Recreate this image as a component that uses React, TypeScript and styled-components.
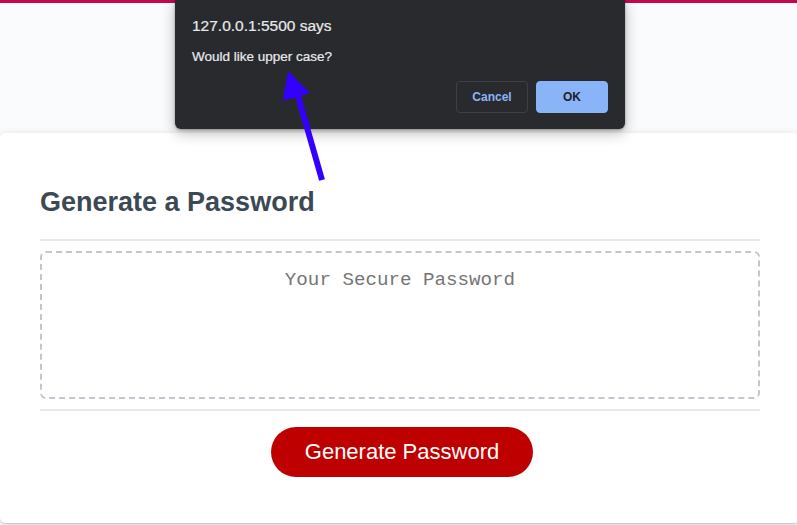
import React from "react";
import styled, { createGlobalStyle } from "styled-components";

const Global = createGlobalStyle`
  html, body { margin: 0; padding: 0; }
  body {
    background: #f9fbfd;
    font-family: "Liberation Sans", Arial, sans-serif;
    overflow: hidden;
    width: 797px;
    height: 525px;
  }
`;

const Page = styled.div`
  position: relative;
  width: 797px;
  height: 525px;
  overflow: hidden;
  background: #f9fbfd;
`;

const TopBar = styled.div`
  height: 3px;
  background: #c4084f;
`;

const Wrapper = styled.main`
  padding-top: 130px;
`;

const Card = styled.section`
  box-sizing: border-box;
  width: 800px;
  background: #ffffff;
  border-radius: 5px;
  box-shadow: rgba(0, 0, 0, 0.15) 0px 2px 8px 0px, rgba(0, 0, 0, 0.12) 0 1px 1px;
  color: hsl(206, 17%, 28%);
  font-size: 18px;
  padding: 30px 40px;
`;

const CardHeader = styled.header`
  &::after {
    content: " ";
    display: block;
    width: 100%;
    background: #e7e9eb;
    height: 2px;
  }
`;

const Title = styled.h2`
  font-size: 27px;
  font-weight: 700;
  margin: 24px 0 20.8px;
  line-height: normal;
`;

const CardBody = styled.div`
  min-height: 100px;
`;

const Output = styled.textarea`
  appearance: none;
  box-sizing: border-box;
  display: block;
  width: 100%;
  padding: 16px 15px 84px;
  font-family: "Liberation Mono", "Courier New", monospace;
  font-size: 19.2px;
  line-height: normal;
  text-align: center;
  margin: 10px 0;
  border: 2px dashed #c0c7cf;
  border-radius: 6px;
  resize: none;
  overflow: hidden;
  background: #fff;
  color: #333;
  &::placeholder {
    color: #757575;
  }
`;

const CardFooter = styled.footer`
  text-align: center;
  &::before {
    content: " ";
    display: block;
    width: 100%;
    background: #e7e9eb;
    height: 2px;
  }
`;

const GenerateButton = styled.button`
  border: none;
  background-color: #bf0000;
  border-radius: 25px;
  color: #fff;
  display: inline-block;
  font-family: "Liberation Sans", Arial, sans-serif;
  font-size: 22px;
  line-height: 22px;
  margin: 16px 16px 16px 20px;
  padding: 14px 34px;
  cursor: pointer;
`;

const Dialog = styled.div`
  position: absolute;
  top: 0;
  left: 175px;
  width: 450px;
  height: 129px;
  box-sizing: border-box;
  background: #292a2d;
  border-radius: 0 0 6px 6px;
  box-shadow: 0 4px 14px rgba(0, 0, 0, 0.28), 0 1px 3px rgba(0, 0, 0, 0.3);
  padding: 17px 17px 16px 17px;
  display: flex;
  flex-direction: column;
  z-index: 5;
`;

const DialogTitle = styled.div`
  color: #e8eaed;
  font-size: 15.5px;
  line-height: 18px;
  -webkit-text-stroke: 0.2px #e8eaed;
`;

const DialogMessage = styled.div`
  color: #e8eaed;
  font-size: 13.5px;
  line-height: 16px;
  margin-top: 14px;
  -webkit-text-stroke: 0.2px #e8eaed;
`;

const DialogActions = styled.div`
  margin-top: auto;
  display: flex;
  justify-content: flex-end;
  gap: 8px;
`;

const DialogButton = styled.button<{ $primary?: boolean }>`
  width: 72px;
  height: 32px;
  box-sizing: border-box;
  border-radius: 4px;
  font-family: "Liberation Sans", Arial, sans-serif;
  font-size: 12px;
  font-weight: 700;
  cursor: pointer;
  border: 1px solid ${(p) => (p.$primary ? "#8ab4f8" : "#3c4043")};
  background: ${(p) => (p.$primary ? "#8ab4f8" : "transparent")};
  color: ${(p) => (p.$primary ? "#202124" : "#8ab4f8")};
`;

const ArrowLayer = styled.svg`
  position: absolute;
  top: 0;
  left: 0;
  width: 797px;
  height: 525px;
  pointer-events: none;
  z-index: 10;
`;

export default function App() {
  return (
    <Page>
      <Global />
      <TopBar />
      <Wrapper>
        <Card>
          <CardHeader>
            <Title>Generate a Password</Title>
          </CardHeader>
          <CardBody>
            <Output readOnly rows={2} placeholder="Your Secure Password" />
          </CardBody>
          <CardFooter>
            <GenerateButton>Generate Password</GenerateButton>
          </CardFooter>
        </Card>
      </Wrapper>
      <Dialog>
        <DialogTitle>127.0.0.1:5500 says</DialogTitle>
        <DialogMessage>Would like upper case?</DialogMessage>
        <DialogActions>
          <DialogButton>Cancel</DialogButton>
          <DialogButton $primary>OK</DialogButton>
        </DialogActions>
      </Dialog>
      <ArrowLayer viewBox="0 0 797 525">
        <line x1="298" y1="96" x2="322" y2="180" stroke="#3300ff" strokeWidth="6" />
        <polygon points="288,71 283,101 310,93" fill="#3300ff" />
      </ArrowLayer>
    </Page>
  );
}
